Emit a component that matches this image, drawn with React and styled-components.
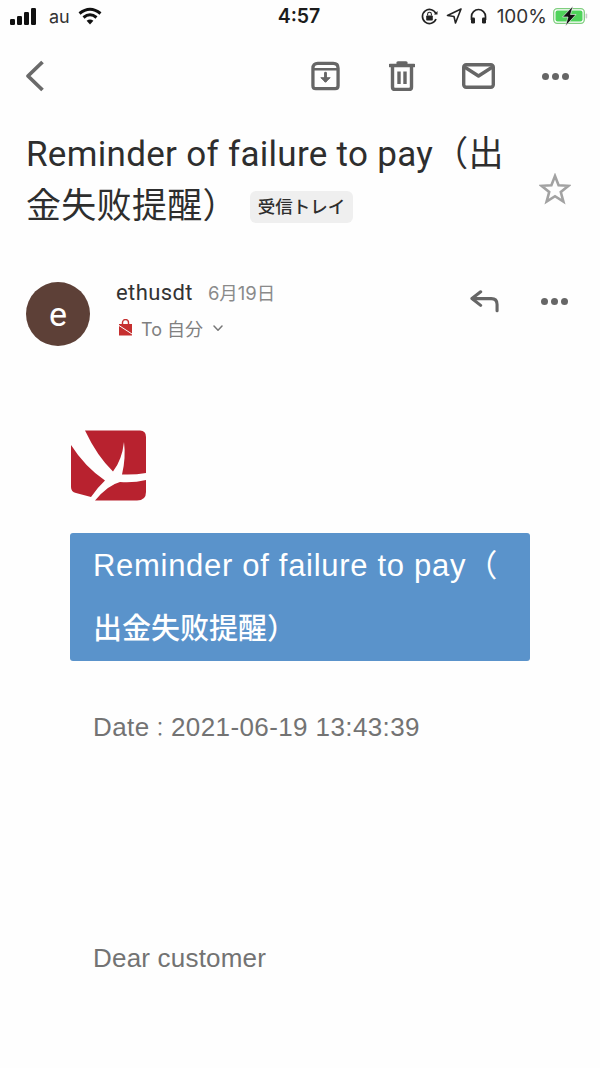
import React from 'react';
import styled, { createGlobalStyle } from 'styled-components';

const cjk = '"Noto Sans CJK JP", sans-serif';

const Global = createGlobalStyle`
    html, body {
        margin: 0;
        padding: 0;
        background: #fff;
    }
    body {
        width: 600px;
        height: 1068px;
        overflow: hidden;
    }
`

const Page = styled.div`
    width: 600px;
    height: 1068px;
    overflow: hidden;
    background: #fefefe;
    font-family: Inter, ${cjk};
`

// status bar

const StatusBar = styled.div`
    height: 32px;
    display: grid;
    grid-template-columns: 1fr auto 1fr;
    align-items: center;
    padding: 0 12px 0 10px;
    color: #1c1c1c;
    font-size: 18px;
`

const StatusLeft = styled.div`
    display: flex;
    align-items: center;
`

const Carrier = styled.span`
    margin: 0 8px 0 11px;
    font-size: 18px;
    color: #333;
`

const Clock = styled.div`
    font-size: 19.5px;
    font-weight: 600;
`

const StatusRight = styled.div`
    display: flex;
    align-items: center;
    justify-content: flex-end;
    gap: 8px;
`

const Percent = styled.span`
    font-size: 19px;
    color: #333;
    margin: 0 -2px 0 2px;
`

// toolbar

const Toolbar = styled.div`
    height: 58px;
    margin-top: 15px;
    display: flex;
    align-items: center;
    padding: 0 31px 0 25px;
`

const ToolSpacer = styled.div`
    flex: 1;
`

const ToolIcons = styled.div`
    display: flex;
    align-items: center;
    gap: 47px;
`

const ToolIcon = styled.svg`
    display: block;
    fill: none;
    margin-right: ${p => p.$after || 0}px;
    stroke: ${p => p.$color || '#666'};
    stroke-width: ${p => p.$weight || 3.4};
    stroke-linecap: round;
    stroke-linejoin: round;
`

const Dots = styled.div`
    display: flex;
    gap: 3px;
`

const Dot = styled.span`
    width: 7px;
    height: 7px;
    border-radius: 50%;
    background: #666;
`

// subject

const SubjectRow = styled.div`
    display: flex;
    align-items: flex-start;
    justify-content: space-between;
    padding: 0 29px 0 26px;
    margin-top: 24px;
`

const Subject = styled.h1`
    margin: 0;
    font-family: Roboto, ${cjk};
    font-weight: 400;
    font-size: 35px;
    line-height: 52px;
    letter-spacing: 0.3px;
    color: #2e2e2e;
`

const InboxTag = styled.span`
    display: inline-block;
    vertical-align: 5px;
    margin-left: 12px;
    padding: 0 8px;
    height: 32px;
    line-height: 32px;
    border-radius: 6px;
    background: #efefef;
    color: #2e2e2e;
    font-size: 17.5px;
    letter-spacing: 0;
    font-weight: 500;
`

const StarSlot = styled.div`
    margin-top: 44px;
`

// sender

const SenderRow = styled.div`
    display: flex;
    align-items: flex-start;
    padding: 0 32px 0 26px;
    margin-top: 49px;
`

const Avatar = styled.div`
    width: 64px;
    height: 64px;
    border-radius: 50%;
    background: #5d4037;
    color: #fff;
    font-family: Roboto, sans-serif;
    font-size: 34px;
    display: flex;
    align-items: center;
    justify-content: center;
    margin-right: 26px;
`

const SenderInfo = styled.div`
    flex: 1;
`

const NameLine = styled.div`
    display: flex;
    align-items: baseline;
    gap: 15px;
    height: 24px;
    margin-top: -3px;
`

const Name = styled.span`
    font-family: Roboto, sans-serif;
    font-size: 22px;
    letter-spacing: 0.4px;
    color: #333;
`

const SentDate = styled.span`
    font-size: 18.5px;
    color: #8a8a8a;
`

const ToLine = styled.div`
    display: flex;
    align-items: center;
    margin-top: 12px;
    padding-left: 2px;
    height: 26px;
    color: #808080;
    font-size: 18px;
`

const ToText = styled.span`
    margin: 0 10px 0 8px;
`

const SenderActions = styled.div`
    display: flex;
    align-items: center;
    gap: 42px;
    margin-top: 7px;
`

// mail body

const MailBody = styled.div`
    padding: 0 70px;
    margin-top: 84px;
`

const Logo = styled.svg`
    display: block;
    width: 77px;
    height: 72px;
`

const Banner = styled.div`
    margin-top: 31px;
    height: 127px;
    padding: 1px 23px 0;
    border-radius: 3px;
    background: #5a93cb;
    color: #fff;
    font-family: "Liberation Sans", ${cjk};
    font-size: 31px;
    line-height: 63px;
    letter-spacing: 0.7px;
`

const BannerCjk = styled.span`
    font-size: 29px;
    font-weight: 500;
    letter-spacing: 0;
`

const MailText = styled.p`
    margin: ${p => p.$top}px 0 0;
    padding-left: 23px;
    font-family: "Liberation Sans", ${cjk};
    font-size: 26px;
    line-height: 34px;
    letter-spacing: ${p => p.$spacing}px;
    color: #737373;
`

const Colon = styled.span`
    font-size: 21px;
    font-weight: 300;
`

const Back = () => (
    <ToolIcon width="20" height="32" viewBox="0 0 20 32" $weight={3.8} $color="#6a6a6a">
        <path d="M17.5 2 L3 16 L17.5 30" strokeLinecap="butt" />
    </ToolIcon>
)

const Archive = () => (
    <ToolIcon width="29" height="30" viewBox="0 0 30 30" $after={2}>
        <path d="M2 7 Q2 2 7 2 L23 2 Q28 2 28 7 L28 25 Q28 28 25 28 L5 28 Q2 28 2 25 Z" />
        <path d="M2.5 8 L27.5 8" strokeWidth="2.6" />
        <path d="M15 12 L15 20" strokeWidth="3" />
        <path d="M10.5 17 L15 21.5 L19.5 17 Z" fill="#666" strokeWidth="1" />
    </ToolIcon>
)

const Trash = () => (
    <ToolIcon width="26" height="30" viewBox="0 0 26 30">
        <path d="M1 4.5 L25 4.5" />
        <path d="M9 2 L17 2" />
        <path d="M3.5 5 L3.5 26 Q3.5 28.5 6 28.5 L20 28.5 Q22.5 28.5 22.5 26 L22.5 5" />
        <path d="M10 10.5 L10 23 M16 10.5 L16 23" strokeLinecap="butt" />
    </ToolIcon>
)

const Mail = () => (
    <ToolIcon width="33" height="26" viewBox="0 0 33 26">
        <rect x="1.7" y="1.7" width="29.6" height="22.6" rx="2.5" />
        <path d="M2.5 4 L16.5 13 L30.5 4" />
    </ToolIcon>
)

const MoreDots = () => (
    <Dots>
        <Dot /><Dot /><Dot />
    </Dots>
)

const Star = () => (
    <ToolIcon width="32" height="32" viewBox="0 0 32 32" $weight={2.6} $color="#a2a2a2">
        <path d="M16 3 L19.6 12.2 L29.5 12.8 L21.8 19 L24.4 28.6 L16 23.2 L7.6 28.6 L10.2 19 L2.5 12.8 L12.4 12.2 Z" strokeLinejoin="miter" />
    </ToolIcon>
)

const Reply = () => (
    <ToolIcon width="29" height="24" viewBox="0 0 30 24" $weight={3.2} $color="#666">
        <path d="M11 2.5 L2 9.5 L11 16.5" />
        <path d="M2.5 9.5 L22 9.5 Q28 9.5 28 15.5 L28 22" />
    </ToolIcon>
)

const Signal = () => (
    <svg width="28" height="17" viewBox="0 0 28 17">
        <rect x="0" y="11" width="5" height="6" rx="1.2" fill="#111" />
        <rect x="7" y="8" width="5" height="9" rx="1.2" fill="#111" />
        <rect x="14" y="4" width="5" height="13" rx="1.2" fill="#111" />
        <rect x="21" y="0" width="5" height="17" rx="1.2" fill="#111" />
    </svg>
)

const Wifi = () => (
    <svg width="24" height="18" viewBox="0 0 24 18" fill="none" stroke="#111" strokeWidth="3">
        <path d="M1.5 6.5 Q12 -2 22.5 6.5" />
        <path d="M5.5 10.5 Q12 5 18.5 10.5" />
        <path d="M12 17.5 L8.6 13.8 Q12 11.2 15.4 13.8 Z" fill="#111" stroke="none" />
    </svg>
)

const RotationLock = () => (
    <svg width="17" height="17" viewBox="0 0 17 17" fill="none">
        <path d="M15 11 A7 7 0 1 1 15 6" stroke="#222" strokeWidth="1.7" />
        <path d="M13 6.5 L16.5 6.5 L16.5 3 Z" fill="#222" />
        <rect x="5.2" y="7.5" width="6.6" height="5" rx="0.8" fill="#222" />
        <path d="M6.6 7.5 V6.2 A1.9 1.9 0 0 1 10.4 6.2 V7.5" stroke="#222" strokeWidth="1.1" />
    </svg>
)

const Location = () => (
    <svg width="16" height="16" viewBox="0 0 16 16" fill="none">
        <path d="M15 1 L1.5 7.5 L8 8.5 L9.5 15 Z" stroke="#222" strokeWidth="1.6" strokeLinejoin="round" />
    </svg>
)

const Headphones = () => (
    <svg width="17" height="16" viewBox="0 0 17 16" fill="none">
        <path d="M1.5 12 V8.5 A7 7 0 0 1 15.5 8.5 V12" stroke="#222" strokeWidth="1.7" />
        <rect x="1" y="9.5" width="4" height="6" rx="1.2" fill="#222" />
        <rect x="12" y="9.5" width="4" height="6" rx="1.2" fill="#222" />
    </svg>
)

const Battery = () => (
    <svg width="35" height="20" viewBox="0 0 35 20">
        <rect x="0.7" y="2.7" width="30.6" height="14.6" rx="3.5" fill="none" stroke="#7fce7f" strokeWidth="1.3" />
        <rect x="2.5" y="4.5" width="27" height="11" rx="2" fill="#4fd35a" />
        <rect x="32.6" y="7.5" width="1.6" height="5" rx="0.8" fill="#c9c9c9" />
        <path d="M20 0 L9.5 11 L15 11 L12.5 20 L23 8.5 L17.5 8.5 Z" fill="#111" stroke="#fff" strokeWidth="0.6" />
    </svg>
)

const Bag = () => (
    <svg width="15" height="18" viewBox="0 0 15 18" fill="none">
        <path d="M4.5 5 V3.6 A3 3 0 0 1 10.5 3.6 V5" stroke="#c53030" strokeWidth="1.4" />
        <path d="M1 5 L14 5 L14 16.5 L1 16.5 Z" fill="#c62f2f" />
        <path d="M1 6.5 L14 15" stroke="#fff" strokeWidth="1" />
    </svg>
)

const SmallChevron = () => (
    <ToolIcon width="10" height="7" viewBox="0 0 10 7" $weight={1.5} $color="#777">
        <path d="M1 1 L5 5.2 L9 1" />
    </ToolIcon>
)

const Brand = () => (
    <Logo viewBox="20 10 77 72">
        <path fill="#b8222f" d="M35 10.5 L90 10.5 Q96 10.5 96 17 L96 53 Q85 55 72 54.5 Q76 38 74 22 Q72 40 63 51.5 Q47 36 35 10.5Z" />
        <path fill="#b8222f" d="M21 25 Q35 47 55 60.5 Q47 68 41 77 L26 73 Q21 72 21 67Z" />
        <path fill="#b8222f" d="M45 80.5 Q58 65 70 62 Q84 63 96 60 L96 72 Q96 80.5 87 80.5Z" />
    </Logo>
)

const App = () => {
    return (
        <Page>
            <Global />
            <StatusBar>
                <StatusLeft>
                    <Signal />
                    <Carrier>au</Carrier>
                    <Wifi />
                </StatusLeft>
                <Clock>4:57</Clock>
                <StatusRight>
                    <RotationLock />
                    <Location />
                    <Headphones />
                    <Percent>100%</Percent>
                    <Battery />
                </StatusRight>
            </StatusBar>
            <Toolbar>
                <Back />
                <ToolSpacer />
                <ToolIcons>
                    <Archive />
                    <Trash />
                    <Mail />
                    <MoreDots />
                </ToolIcons>
            </Toolbar>
            <SubjectRow>
                <Subject>
                    Reminder of failure to pay（出<br />
                    金失败提醒）<InboxTag>受信トレイ</InboxTag>
                </Subject>
                <StarSlot>
                    <Star />
                </StarSlot>
            </SubjectRow>
            <SenderRow>
                <Avatar>e</Avatar>
                <SenderInfo>
                    <NameLine>
                        <Name>ethusdt</Name>
                        <SentDate>6月19日</SentDate>
                    </NameLine>
                    <ToLine>
                        <Bag />
                        <ToText>To 自分</ToText>
                        <SmallChevron />
                    </ToLine>
                </SenderInfo>
                <SenderActions>
                    <Reply />
                    <MoreDots />
                </SenderActions>
            </SenderRow>
            <MailBody>
                <Brand />
                <Banner>
                    Reminder of failure to pay（<br />
                    <BannerCjk>出金失败提醒）</BannerCjk>
                </Banner>
                <MailText $top={49} $spacing={0.4}>Date<Colon>：</Colon>2021-06-19 13:43:39</MailText>
                <MailText $top={195} $spacing={0.2}>Dear customer</MailText>
            </MailBody>
        </Page>
    )
}

export default App;
